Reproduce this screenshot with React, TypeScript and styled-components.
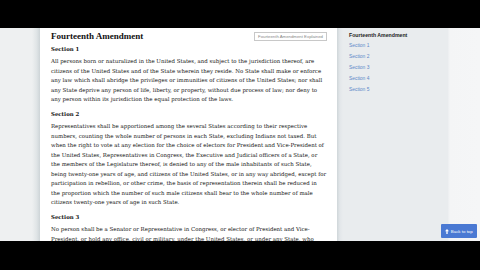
import React from "react";
import styled, { createGlobalStyle } from "styled-components";

const Global = createGlobalStyle`
  html, body { margin: 0; padding: 0; width: 480px; height: 270px; overflow: hidden; background: #000; }
  #root { width: 480px; height: 270px; }
`;

const Screen = styled.div`
  width: 480px;
  height: 270px;
  display: flex;
  flex-direction: column;
  background: #000;
`;

const Letterbox = styled.div<{ $h: number }>`
  height: ${(p) => p.$h}px;
  background: #000;
  flex: none;
`;

const Page = styled.div`
  position: relative;
  height: 213px;
  display: flex;
  overflow: hidden;
  background: #f0f1f2;
`;

const Gutter = styled.div`
  width: 40px;
  flex: none;
  background: linear-gradient(to right, #eef0f1 0%, #eef0f1 80%, #dfe4e6 92%, #cdd4d7 100%);
`;

const Card = styled.main`
  width: 297px;
  flex: none;
  background: #fff;
  box-sizing: border-box;
  padding: 3px 10px 0 11px;
  font-family: "DejaVu Serif", Georgia, serif;
  color: #161616;
`;

const TitleRow = styled.div`
  display: flex;
  justify-content: space-between;
  align-items: flex-start;
  height: 13.5px;
`;

const Title = styled.h1`
  margin: 0;
  font-family: "Liberation Serif", Georgia, serif;
  font-size: 9px;
  line-height: 11px;
  font-weight: bold;
  color: #111;
`;

const Explain = styled.button`
  margin: 0.5px 0 0 0;
  height: 9px;
  padding: 0 3px;
  box-sizing: border-box;
  border: 1px solid #c8c8c8;
  background: #fff;
  color: #888;
  font-family: "Liberation Sans", Arial, sans-serif;
  font-size: 4.3px;
  line-height: 7px;
  white-space: nowrap;
`;

const SectionTitle = styled.h2`
  margin: 0;
  font-size: 5.4px;
  line-height: 9px;
  height: 9px;
  font-weight: bold;
  color: #111;
`;

const Para = styled.p`
  margin: 3.75px 0 4.75px 0;
  font-size: 5.45px;
  line-height: 9.5px;
`;

const Line = styled.span`
  display: block;
  white-space: nowrap;
`;

const Sidebar = styled.aside`
  width: 111px;
  flex: none;
  background: linear-gradient(to right, #cfd6d9 0px, #e3e7ea 3px, #e9ecee 6px, #e9ecee 100%);
  box-sizing: border-box;
  padding: 4px 0 0 12px;
  font-family: "Liberation Sans", Arial, sans-serif;
`;

const SideTitle = styled.div`
  font-size: 5.2px;
  font-weight: bold;
  color: #222;
  line-height: 7px;
  height: 8px;
`;

const SideLink = styled.a`
  display: block;
  font-size: 4.9px;
  line-height: 11px;
  color: #6088c8;
  text-decoration: none;
`;

const RightPane = styled.div`
  flex: 1;
  background: linear-gradient(to right, #eceef0 0px, #f4f5f6 2px, #f5f6f7 100%);
`;

const BackTop = styled.button`
  position: absolute;
  left: 441px;
  top: 196px;
  width: 36px;
  height: 14px;
  border: none;
  border-radius: 1px;
  background: #4a79d3;
  color: #fff;
  font-family: "Liberation Sans", Arial, sans-serif;
  font-size: 4.4px;
  display: flex;
  align-items: center;
  justify-content: center;
  gap: 1.5px;
  padding: 0;
`;

const p1 = [
  "All persons born or naturalized in the United States, and subject to the jurisdiction thereof, are",
  "citizens of the United States and of the State wherein they reside. No State shall make or enforce",
  "any law which shall abridge the privileges or immunities of citizens of the United States; nor shall",
  "any State deprive any person of life, liberty, or property, without due process of law; nor deny to",
  "any person within its jurisdiction the equal protection of the laws.",
];

const p2 = [
  "Representatives shall be apportioned among the several States according to their respective",
  "numbers, counting the whole number of persons in each State, excluding Indians not taxed. But",
  "when the right to vote at any election for the choice of electors for President and Vice-President of",
  "the United States, Representatives in Congress, the Executive and Judicial officers of a State, or",
  "the members of the Legislature thereof, is denied to any of the male inhabitants of such State,",
  "being twenty-one years of age, and citizens of the United States, or in any way abridged, except for",
  "participation in rebellion, or other crime, the basis of representation therein shall be reduced in",
  "the proportion which the number of such male citizens shall bear to the whole number of male",
  "citizens twenty-one years of age in such State.",
];

const p3 = [
  "No person shall be a Senator or Representative in Congress, or elector of President and Vice-",
  "President, or hold any office, civil or military, under the United States, or under any State, who",
];

const Lines = ({ lines }: { lines: string[] }) => (
  <Para>
    {lines.map((l, i) => (
      <Line key={i}>{l}</Line>
    ))}
  </Para>
);

export default function App() {
  return (
    <>
      <Global />
      <Screen>
        <Letterbox $h={28} />
        <Page>
          <Gutter />
          <Card>
            <TitleRow>
              <Title>Fourteenth Amendment</Title>
              <Explain>Fourteenth Amendment Explained</Explain>
            </TitleRow>
            <SectionTitle>Section 1</SectionTitle>
            <Lines lines={p1} />
            <SectionTitle>Section 2</SectionTitle>
            <Lines lines={p2} />
            <SectionTitle>Section 3</SectionTitle>
            <Lines lines={p3} />
          </Card>
          <Sidebar>
            <SideTitle>Fourteenth Amendment</SideTitle>
            {[1, 2, 3, 4, 5].map((n) => (
              <SideLink key={n} href={`#s${n}`}>
                Section {n}
              </SideLink>
            ))}
          </Sidebar>
          <RightPane />
          <BackTop>
            <svg width="4" height="5" viewBox="0 0 8 10">
              <path d="M4 0 L8 4.5 H5.3 V10 H2.7 V4.5 H0 Z" fill="#fff" />
            </svg>
            Back to top
          </BackTop>
        </Page>
        <Letterbox $h={29} />
      </Screen>
    </>
  );
}
